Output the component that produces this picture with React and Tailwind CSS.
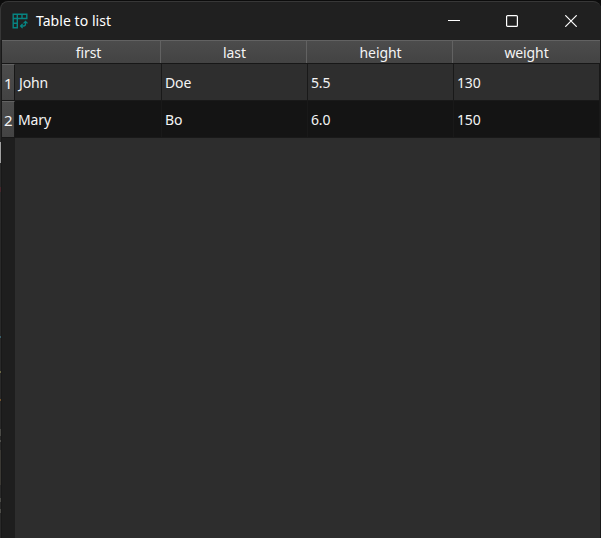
const columns = ["first", "last", "height", "weight"];
const rows = [
  ["John", "Doe", "5.5", "130"],
  ["Mary", "Bo", "6.0", "150"],
];
const edgeMarks = [
  { gap: 2, height: 21, color: "#a0a0a0" },
  { gap: 24, height: 5, color: "#48262c" },
  { gap: 144, height: 2, color: "#39606b" },
  { gap: 33, height: 2, color: "#6b6845" },
  { gap: 26, height: 2, color: "#76552d" },
  { gap: 28, height: 7, color: "#4a4a46" },
  { gap: 4, height: 2, color: "#50504c" },
  { gap: 8, height: 35, color: "#3b3934" },
  { gap: 13, height: 4, color: "#4c4c48" },
  { gap: 7, height: 4, color: "#4c4c48" },
];

function TableIcon() {
  return (
    <svg className="ml-[11px] h-4 w-4 shrink-0" viewBox="0 0 16 16" fill="none" stroke="#078482" strokeWidth="1.4">
      <path d="M1.2 1.2H14.8V5.5H5.3V14.8H1.2ZM1.2 5.5H5.3V1.2M10 1.2V5.5M1.2 10.2H5.3" />
      <path d="M9 13H11.4Q13.5 13 13.5 11V9.3M11.5 10.4L13.5 8.5L15.5 10.4M10.6 10.9L8.6 13L10.6 15.1" strokeWidth="1.3" />
    </svg>
  );
}

function TitleBar() {
  return (
    <div className="flex h-[39px] shrink-0 items-center rounded-t-lg border-t border-l border-[#373737] bg-[#202020] text-white">
      <TableIcon />
      <span className="ml-2 flex-1 text-[14px] leading-5 tracking-[0.05px] whitespace-pre">Table to list</span>
      <svg className="mr-[46px] h-3 w-3" viewBox="0 0 12 12" stroke="white">
        <path d="M0 5.5H12" />
      </svg>
      <svg className="mr-[47px] h-3 w-3" viewBox="0 0 12 12" fill="none" stroke="white" strokeWidth="1.2">
        <rect x="0.6" y="0.6" width="10.8" height="10.8" rx="1" />
      </svg>
      <svg className="mr-[24px] h-3 w-3" viewBox="0 0 12 12" stroke="white" strokeWidth="1.2">
        <path d="M0.3 0.3L11.7 11.7M11.7 0.3L0.3 11.7" />
      </svg>
    </div>
  );
}

export default function App() {
  return (
    <div className="flex h-[538px] w-[601px] overflow-hidden bg-[#0c0c0c] font-['Noto_Sans','Open_Sans',sans-serif] text-[14px] text-[#f4f4f4]">
      <div className="flex min-w-0 flex-1 flex-col pt-px">
        <TitleBar />
        <div className="flex min-h-0 flex-1">
          <div className="w-px shrink-0 bg-[#292929] pt-[100px]">
            {edgeMarks.map((m, i) => (
              <div key={i} style={{ height: m.height, marginTop: m.gap, backgroundColor: m.color }} />
            ))}
          </div>
          <div className="flex flex-1 flex-col border-r border-l border-[#191919]">
            <div className="grid h-6 shrink-0 grid-cols-[159px_146px_146px_147px] border-t border-b border-t-[#626262] border-b-[#171717] bg-linear-to-b from-[#4c4c4c] to-[#434343] tracking-[-0.1px]">
              {columns.map((c) => (
                <div key={c} className="flex items-center justify-center border-r border-[#626262] pl-[2px] leading-5 first:pl-[15px] last:border-r-0 last:pl-0">
                  <span className="relative top-px">{c}</span>
                </div>
              ))}
            </div>
            <div className="flex flex-1">
              <div className="w-[13px] shrink-0 bg-[#1e1e1e]">
                {rows.map((r, i) => (
                  <div key={r[0]} className="flex h-[37px] items-center border-t border-r border-b border-t-[#626262] border-r-[#171717] border-b-[#171717] bg-linear-to-b from-[#4c4c4c] to-[#434343] pt-px pl-[2px] text-[15px] leading-5">
                    {i + 1}
                  </div>
                ))}
              </div>
              <div className="flex-1 bg-[#2d2d2d]">
                {rows.map((r) => (
                  <div key={r[0]} className="grid h-[37px] grid-cols-[147px_146px_146px_146px] border-b border-[#191919] bg-[#2e2e2e] last:bg-[#141414]">
                    {r.map((v, i) => (
                      <div key={i} className="flex items-center border-r border-[#191919] pt-px pl-[3px] leading-5 tracking-[-0.15px]">
                        <span className={v === "John" ? "ml-px" : ""}>{v}</span>
                      </div>
                    ))}
                  </div>
                ))}
              </div>
            </div>
          </div>
        </div>
      </div>
    </div>
  );
}
